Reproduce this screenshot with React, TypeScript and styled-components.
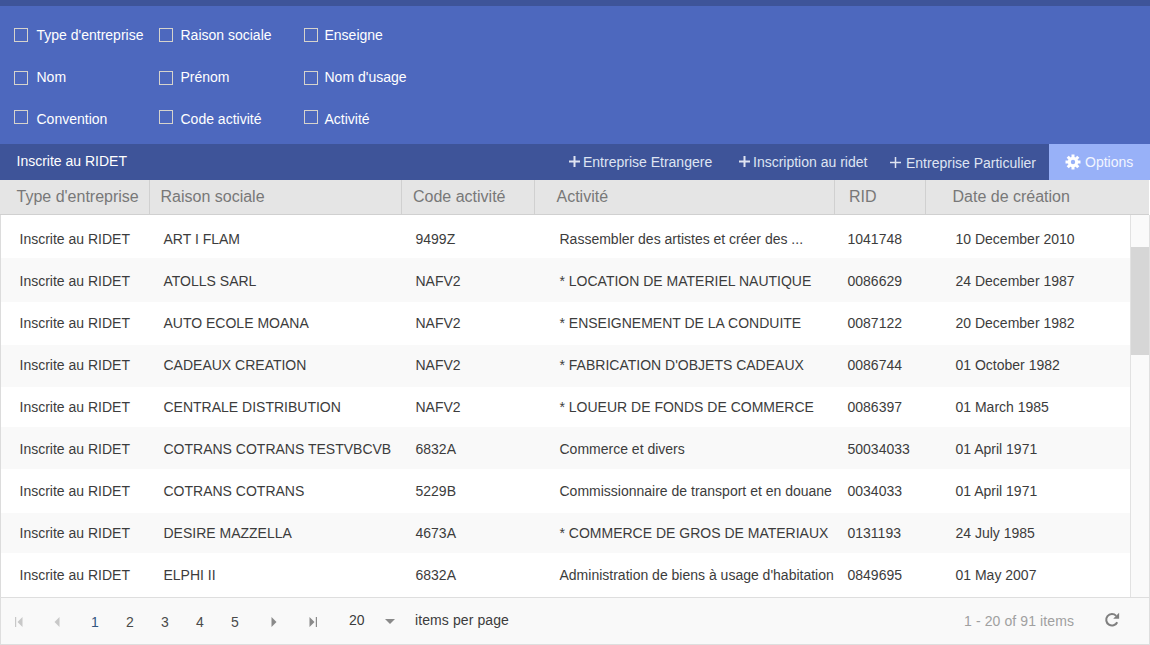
import React from "react";
import styled, { createGlobalStyle } from "styled-components";

const Global = createGlobalStyle`
  html, body { margin: 0; padding: 0; background: #fff; }
  body { font-family: "Liberation Sans", Arial, sans-serif; font-size: 14px; overflow: hidden; }
`;

const Page = styled.div`
  width: 1150px;
  height: 645px;
  display: flex;
  flex-direction: column;
  overflow: hidden;
`;
const TopStrip = styled.div`
  height: 6px;
  background: #3e5499;
`;
const Filters = styled.div`
  height: 138px;
  box-sizing: border-box;
  background: #4d68be;
  padding-top: 8px;
  display: grid;
  grid-template-columns: 145px 145px 1fr;
  grid-auto-rows: 42px;
  padding-left: 14px;
`;
const FilterItem = styled.label`
  display: flex;
  align-items: center;
  color: #fff;
  font-size: 14px;
  height: 42px;
`;
const Check = styled.span<{ $shift: number; $gap: number }>`
  width: 12px;
  height: 12px;
  border: 1px solid #d6d3cc;
  flex: none;
  margin-right: ${(p) => p.$gap}px;
  position: relative;
  top: ${(p) => p.$shift}px;
`;
const Toolbar = styled.div`
  height: 36px;
  background: #3e5499;
  display: flex;
  align-items: center;
  color: #fff;
  font-size: 14px;
`;
const ToolbarTitle = styled.div`
  padding-left: 16.5px;
  flex: 1;
  padding-bottom: 2px;
`;
const ToolLink = styled.div<{ $w: number; $gap: number; $low?: boolean }>`
  width: ${(p) => p.$w}px;
  display: flex;
  align-items: center;
  color: #dfe4f2;
  white-space: nowrap;
  padding-top: ${(p) => (p.$low ? "1px" : "0")};
  padding-bottom: ${(p) => (p.$low ? "0" : "1px")};
  svg { margin-right: ${(p) => p.$gap}px; flex: none; }
`;
const OptionsBtn = styled.div`
  width: 101px;
  height: 36px;
  background: #98b1f8;
  color: #f2f5ff;
  display: flex;
  align-items: center;
  gap: 4px;
  padding: 0 0 1px 16px;
  box-sizing: border-box;
  svg { flex: none; }
`;
const HeaderRow = styled.div`
  height: 35px;
  margin-right: 1px;
  box-sizing: border-box;
  background: #e5e5e5;
  border-bottom: 1px solid #d0d0d0;
  display: grid;
  grid-template-columns: 150px 252px 133px 300px 91px 1fr;
`;
const HeaderCell = styled.div<{ $pad: number; $last?: boolean }>`
  border-right: ${(p) => (p.$last ? "none" : "1px solid #d0d0d0")};
  padding-left: ${(p) => p.$pad}px;
  font-size: 16px;
  color: #787878;
  display: flex;
  align-items: center;
  white-space: nowrap;
`;
const Body = styled.div`
  height: 382px;
  box-sizing: border-box;
  display: flex;
  border-left: 1px solid #dcdcdc;
  border-right: 1px solid #e0e0e0;
  overflow: hidden;
`;
const Rows = styled.div`
  flex: 1;
  overflow: hidden;
`;
const Row = styled.div<{ $alt: boolean; $h: number; $pt: number }>`
  height: ${(p) => p.$h}px;
  box-sizing: border-box;
  padding-top: ${(p) => p.$pt}px;
  background: ${(p) => (p.$alt ? "#f9f9f9" : "#fff")};
  display: grid;
  grid-template-columns: 144px 252px 144px 288px 108px 1fr;
  padding-left: 18.5px;
  align-items: start;
  color: #3c3c3c;
  font-size: 14px;
  line-height: 16px;
  white-space: nowrap;
`;
const Cell = styled.div`
  overflow: visible;
`;
const Track = styled.div`
  width: 18px;
  background: #fafafa;
  border-left: 1px solid #e2e2e2;
  padding-top: 32px;
`;
const Thumb = styled.div`
  height: 108px;
  background: #d6d6d6;
`;
const Pager = styled.div`
  height: 48px;
  box-sizing: border-box;
  background: #f9f9f9;
  border: 1px solid #dedede;
  display: flex;
  align-items: center;
  color: #3c3c3c;
`;
const PageIcon = styled.span<{ $w: number; $ml: number }>`
  display: flex;
  width: ${(p) => p.$w}px;
  margin-left: ${(p) => p.$ml}px;
  justify-content: center;
  padding-top: 2px;
`;
const PageNums = styled.span`
  display: flex;
  margin-left: 17.5px;
`;
const PageNum = styled.span<{ $active?: boolean }>`
  width: 35px;
  text-align: center;
  font-size: 14px;
  padding-top: 2px;
  color: ${(p) => (p.$active ? "#33567f" : "#4a4a4a")};
`;
const PageSize = styled.span`
  margin-left: 32.5px;
  width: 35px;
  font-size: 14px;
  padding-bottom: 3px;
`;
const Caret = styled.span`
  width: 0;
  height: 0;
  border-left: 5px solid transparent;
  border-right: 5px solid transparent;
  border-top: 5px solid #8a8a8a;
  margin-right: 20px;
  margin-left: 1px;
`;
const PerPage = styled.span`
  font-size: 14px;
  letter-spacing: 0.1px;
  padding-bottom: 3px;
  flex: 1;
`;
const Range = styled.span`
  color: #a0a0a0;
  font-size: 14px;
  letter-spacing: 0.1px;
  margin-right: 30px;
`;
const Refresh = styled.span`
  display: flex;
  margin-right: 29px;
  padding-bottom: 2px;
`;

const Plus = ({ weight = 2 }: { weight?: number }) => (
  <svg width="11" height="11" viewBox="0 0 11 11">
    <path d="M5.5 0v11M0 5.5h11" stroke="#dfe4f2" strokeWidth={weight} />
  </svg>
);
const Gear = () => (
  <svg width="16" height="16" viewBox="0 0 16 16">
    <g stroke="#fff" strokeWidth="3">
      <path d="M8 0.5v15M0.5 8h15M2.7 2.7l10.6 10.6M13.3 2.7L2.7 13.3" />
    </g>
    <circle cx="8" cy="8" r="3.8" fill="none" stroke="#fff" strokeWidth="2.8" />
    <circle cx="8" cy="8" r="2.2" fill="#98b1f8" />
  </svg>
);
const Tri = ({ dir, color }: { dir: "l" | "r"; color: string }) => (
  <svg width="6" height="10" viewBox="0 0 6 10">
    <path d={dir === "l" ? "M5.5 0v10L0.5 5z" : "M0.5 0v10l5-5z"} fill={color} />
  </svg>
);
const TriBar = ({ dir, color }: { dir: "l" | "r"; color: string }) => (
  <svg width="8" height="10" viewBox="0 0 8 10">
    {dir === "l" ? (
      <path d="M0 0h1.2v10H0zM7.5 0v10L2.5 5z" fill={color} />
    ) : (
      <path d="M0.5 0v10l5-5zM6.8 0H8v10H6.8z" fill={color} />
    )}
  </svg>
);
const RefreshIcon = () => (
  <svg width="16" height="16" viewBox="0 0 15 15" fill="none">
    <path d="M12.4 9.6A5.4 5.4 0 1 1 11.4 3.6" stroke="#808080" strokeWidth="1.9" />
    <path d="M14.2 0.8v5.6H8.6z" fill="#808080" />
  </svg>
);

const shifts = [0, 1, -2];
const gaps = [8.5, 7.5, 6.5];
const filters = [
  "Type d'entreprise",
  "Raison sociale",
  "Enseigne",
  "Nom",
  "Prénom",
  "Nom d'usage",
  "Convention",
  "Code activité",
  "Activité",
];
const headers: [string, number][] = [
  ["Type d'entreprise", 16.5],
  ["Raison sociale", 10.5],
  ["Code activité", 11],
  ["Activité", 21.5],
  ["RID", 14],
  ["Date de création", 26.5],
];
const rows = [
  { h: 43, pt: 16, cells: ["ART I FLAM", "9499Z", "Rassembler des artistes et créer des ...", "1041748", "10 December 2010"] },
  { h: 44, pt: 15, cells: ["ATOLLS SARL", "NAFV2", "* LOCATION DE MATERIEL NAUTIQUE", "0086629", "24 December 1987"] },
  { h: 43, pt: 13, cells: ["AUTO ECOLE MOANA", "NAFV2", "* ENSEIGNEMENT DE LA CONDUITE", "0087122", "20 December 1982"] },
  { h: 42, pt: 12, cells: ["CADEAUX CREATION", "NAFV2", "* FABRICATION D'OBJETS CADEAUX", "0086744", "01 October 1982"] },
  { h: 40, pt: 12, cells: ["CENTRALE DISTRIBUTION", "NAFV2", "* LOUEUR DE FONDS DE COMMERCE", "0086397", "01 March 1985"] },
  { h: 42, pt: 14, cells: ["COTRANS COTRANS TESTVBCVB", "6832A", "Commerce et divers", "50034033", "01 April 1971"] },
  { h: 44, pt: 14, cells: ["COTRANS COTRANS", "5229B", "Commissionnaire de transport et en douane", "0034033", "01 April 1971"] },
  { h: 40, pt: 12, cells: ["DESIRE MAZZELLA", "4673A", "* COMMERCE DE GROS DE MATERIAUX", "0131193", "24 July 1985"] },
  { h: 44, pt: 14, cells: ["ELPHI II", "6832A", "Administration de biens à usage d'habitation", "0849695", "01 May 2007"] },
];

export default function App() {
  return (
    <Page>
      <Global />
      <TopStrip />
      <Filters>
        {filters.map((label, i) => (
          <FilterItem key={label}>
            <Check $shift={shifts[Math.floor(i / 3)]} $gap={gaps[i % 3]} />
            {label}
          </FilterItem>
        ))}
      </Filters>
      <Toolbar>
        <ToolbarTitle>Inscrite au RIDET</ToolbarTitle>
        <ToolLink $w={170} $gap={3}>
          <Plus />
          Entreprise Etrangere
        </ToolLink>
        <ToolLink $w={151} $gap={3}>
          <Plus />
          Inscription au ridet
        </ToolLink>
        <ToolLink $w={159} $gap={5} $low>
          <Plus weight={1.5} />
          Entreprise Particulier
        </ToolLink>
        <OptionsBtn>
          <Gear />
          Options
        </OptionsBtn>
      </Toolbar>
      <HeaderRow>
        {headers.map(([h, pad], i) => (
          <HeaderCell key={h} $pad={pad} $last={i === headers.length - 1}>
            {h}
          </HeaderCell>
        ))}
      </HeaderRow>
      <Body>
        <Rows>
          {rows.map((r, i) => (
            <Row key={r.cells[0]} $alt={i % 2 === 1} $h={r.h} $pt={r.pt}>
              <Cell>Inscrite au RIDET</Cell>
              {r.cells.map((c, j) => (
                <Cell key={j}>{c}</Cell>
              ))}
            </Row>
          ))}
        </Rows>
        <Track>
          <Thumb />
        </Track>
      </Body>
      <Pager>
        <PageIcon $w={8} $ml={14}>
          <TriBar dir="l" color="#c8c8c8" />
        </PageIcon>
        <PageIcon $w={6} $ml={31}>
          <Tri dir="l" color="#c8c8c8" />
        </PageIcon>
        <PageNums>
          <PageNum $active>1</PageNum>
          <PageNum>2</PageNum>
          <PageNum>3</PageNum>
          <PageNum>4</PageNum>
          <PageNum>5</PageNum>
        </PageNums>
        <PageIcon $w={6} $ml={18}>
          <Tri dir="r" color="#8a8a8a" />
        </PageIcon>
        <PageIcon $w={8} $ml={32}>
          <TriBar dir="r" color="#8a8a8a" />
        </PageIcon>
        <PageSize>20</PageSize>
        <Caret />
        <PerPage>items per page</PerPage>
        <Range>1 - 20 of 91 items</Range>
        <Refresh>
          <RefreshIcon />
        </Refresh>
      </Pager>
    </Page>
  );
}
